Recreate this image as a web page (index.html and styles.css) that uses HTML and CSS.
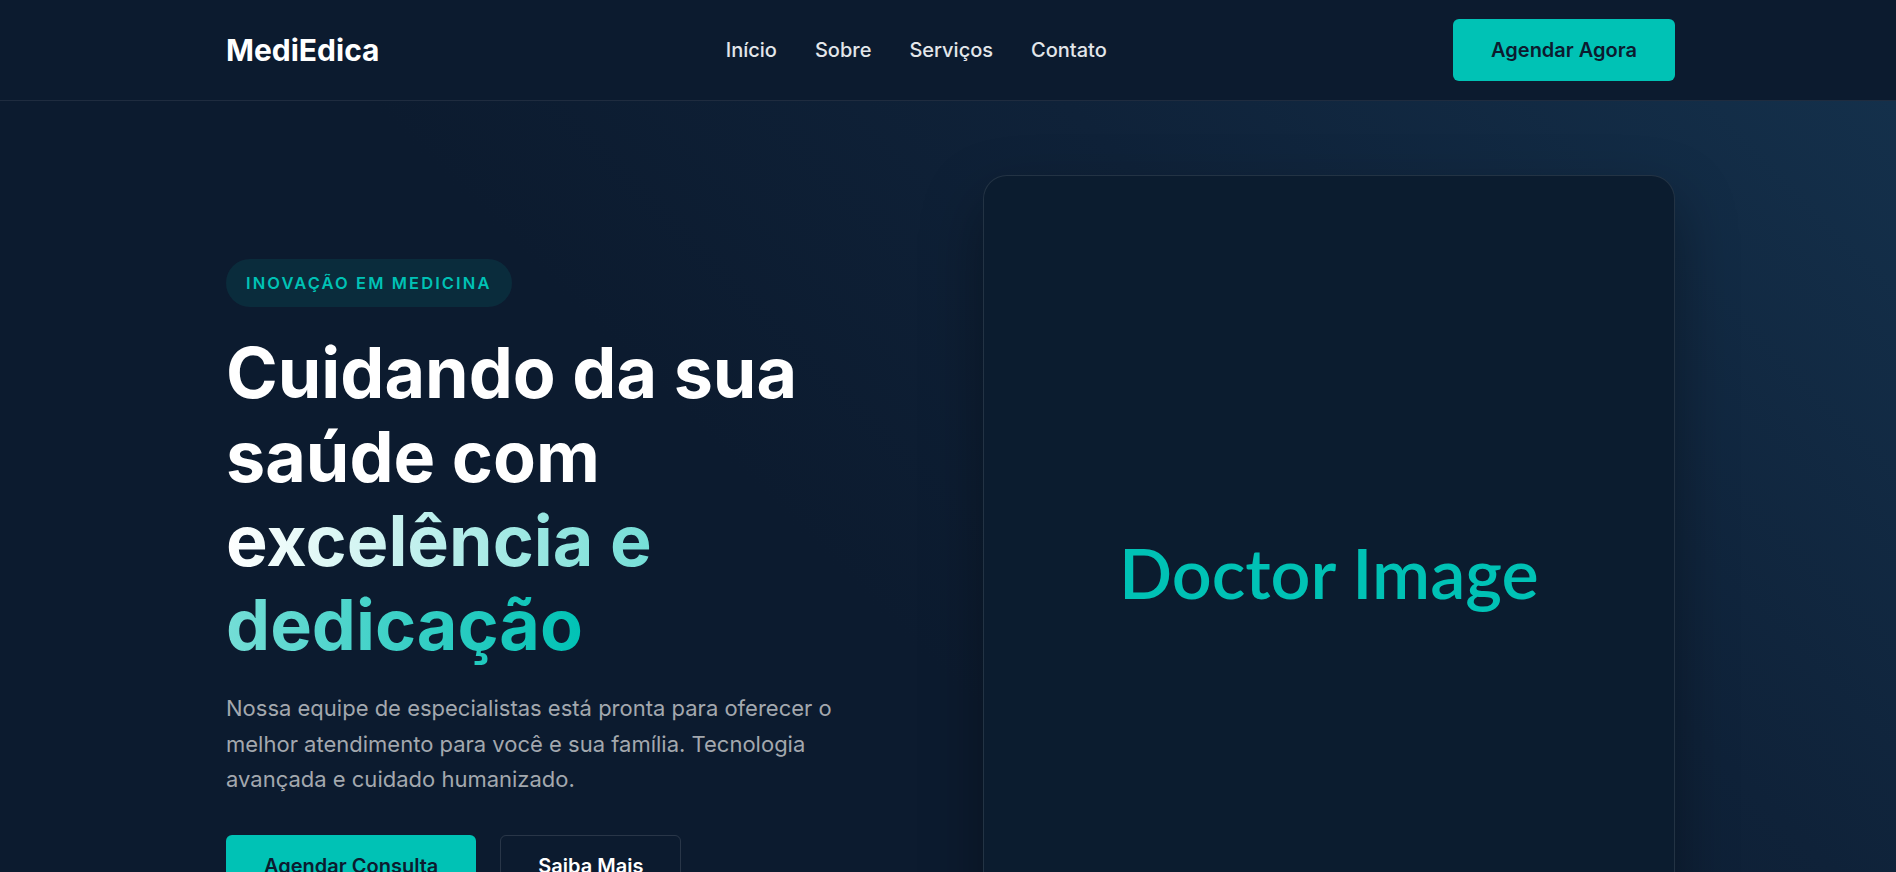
FILE: index.html
```html
<!DOCTYPE html>
<html lang="pt-BR">
<head>
<meta charset="utf-8">
<title>MediEdica</title>
<link rel="stylesheet" href="styles.css">
</head>
<body>
<header class="nav">
  <div class="container nav-inner">
    <a class="logo" href="#">MediEdica</a>
    <nav class="links">
      <a href="#">Início</a>
      <a href="#">Sobre</a>
      <a href="#">Serviços</a>
      <a href="#">Contato</a>
    </nav>
    <a class="btn btn-primary" href="#">Agendar Agora</a>
  </div>
</header>
<section class="hero">
  <div class="container hero-grid">
    <div class="hero-text">
      <span class="badge">INOVAÇÃO EM MEDICINA</span>
      <h1 class="title">Cuidando da sua saúde com <span class="grad">excelência e dedicação</span></h1>
      <p class="lead">Nossa equipe de especialistas está pronta para oferecer o melhor atendimento para você e sua família. Tecnologia avançada e cuidado humanizado.</p>
      <div class="actions">
        <a class="btn btn-primary" href="#">Agendar Consulta</a>
        <a class="btn btn-outline" href="#">Saiba Mais</a>
      </div>
    </div>
    <div class="hero-media">
      <div class="card">Doctor Image</div>
    </div>
  </div>
</section>
</body>
</html>
```
FILE: styles.css
```css
html { scrollbar-width: none; }
* { box-sizing: border-box; }
body {
  margin: 0;
  background: #0c1b2f;
  font-family: Inter, "Noto Sans", sans-serif;
  color: #fff;
}
a { text-decoration: none; color: inherit; }

.container {
  margin: 0 221px 0 226px;
}

.nav {
  background: #0c1b2f;
  border-bottom: 1px solid rgba(255, 255, 255, 0.08);
}
.nav-inner {
  display: flex;
  align-items: center;
  justify-content: space-between;
  padding: 19px 0;
}
.logo {
  font-size: 30px;
  font-weight: 700;
  line-height: 36px;
  color: #fff;
}
.links {
  display: flex;
  gap: 38px;
}
.links a {
  font-size: 20px;
  font-weight: 500;
  line-height: 24px;
  color: #e3e6ea;
}

.btn {
  display: inline-block;
  font-size: 20px;
  font-weight: 600;
  line-height: 24px;
  padding: 19px 38px;
  border-radius: 6px;
}
.btn-primary {
  background: #00c2b5;
  color: #0c1b2f;
}
.btn-outline {
  border: 1px solid rgba(255, 255, 255, 0.12);
  padding: 18px 37px;
  color: #fff;
}

.hero {
  background: linear-gradient(225deg, #14304b 0%, #0f2239 30%, #0c1b2f 55%);
  padding-top: 74px;
  min-height: 800px;
}
.hero-grid {
  display: grid;
  grid-template-columns: 1fr 1fr;
  gap: 64px;
  align-items: center;
}
.hero-text {
  display: flex;
  flex-direction: column;
  align-items: flex-start;
}
.badge {
  display: inline-block;
  padding: 12px 20px;
  border-radius: 999px;
  background: rgba(0, 194, 181, 0.1);
  color: #00c2b5;
  font-size: 16.5px;
  font-weight: 600;
  line-height: 24px;
  letter-spacing: 2.1px;
}
.title {
  margin: 24px 0;
  font-size: 70px;
  line-height: 84px;
  font-weight: 700;
  color: #fff;
}
.grad {
  background: linear-gradient(90deg, #ffffff 0%, #00c2b5 100%);
  -webkit-background-clip: text;
  background-clip: text;
  color: transparent;
}
.lead {
  margin: 0 0 37px;
  max-width: 640px;
  font-size: 22px;
  line-height: 35.5px;
  color: #a3a8ae;
}
.actions {
  display: flex;
  gap: 24px;
}

.card {
  height: 806px;
  padding-bottom: 12px;
  border-radius: 24px;
  border: 1px solid rgba(255, 255, 255, 0.1);
  background: #0b1c2f;
  box-shadow: 0 25px 60px rgba(0, 0, 0, 0.35);
  display: flex;
  align-items: center;
  justify-content: center;
  font-family: Lato, sans-serif;
  font-size: 70px;
  font-weight: 600;
  color: #00c2b5;
}
```
